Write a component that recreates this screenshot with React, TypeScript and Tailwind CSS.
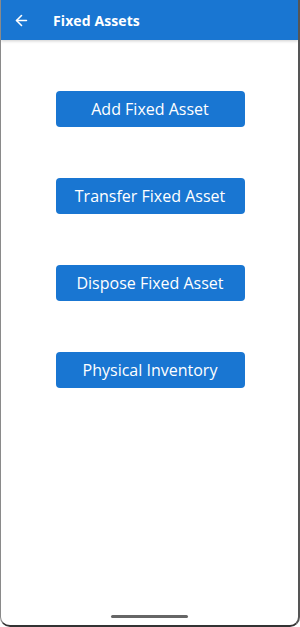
import { ArrowLeft } from "lucide-react"

const ACTIONS = ["Add Fixed Asset", "Transfer Fixed Asset", "Dispose Fixed Asset", "Physical Inventory"]

export default function App() {
  return (
    <div
      className="w-[300px] h-[627px] bg-white flex flex-col border-l border-l-[#8a8a8a] border-r-2 border-r-[#555] border-b-2 border-b-[#333] rounded-b-[10px] overflow-hidden"
      style={{ fontFamily: '"Open Sans", "Noto Sans", sans-serif' }}
    >
      {/* App bar */}
      <header className="h-[40px] shrink-0 bg-[#1976d2] flex items-center shadow-[0_1px_3px_rgba(0,0,0,0.2)]">
        <button type="button" className="w-[40px] flex items-center justify-center text-white">
          <ArrowLeft className="w-[17px] h-[17px]" strokeWidth={2.25} />
        </button>
        <h1 className="ml-[12px] text-[14px] font-bold text-white tracking-[0.1px]">Fixed Assets</h1>
      </header>

      <main className="flex-1 flex flex-col items-center pt-[51px] gap-[51px]">
        {ACTIONS.map((label) => (
          <button
            key={label}
            type="button"
            className="w-[189px] h-[36px] ml-[1px] rounded-[4px] bg-[#1976d2] text-white text-[16px] flex items-center justify-center"
          >
            {label}
          </button>
        ))}
      </main>

      <div className="h-[24px] shrink-0 flex justify-center pt-[14px]">
        <div className="w-[77px] h-[3px] rounded-full bg-[#666]" />
      </div>
    </div>
  )
}
